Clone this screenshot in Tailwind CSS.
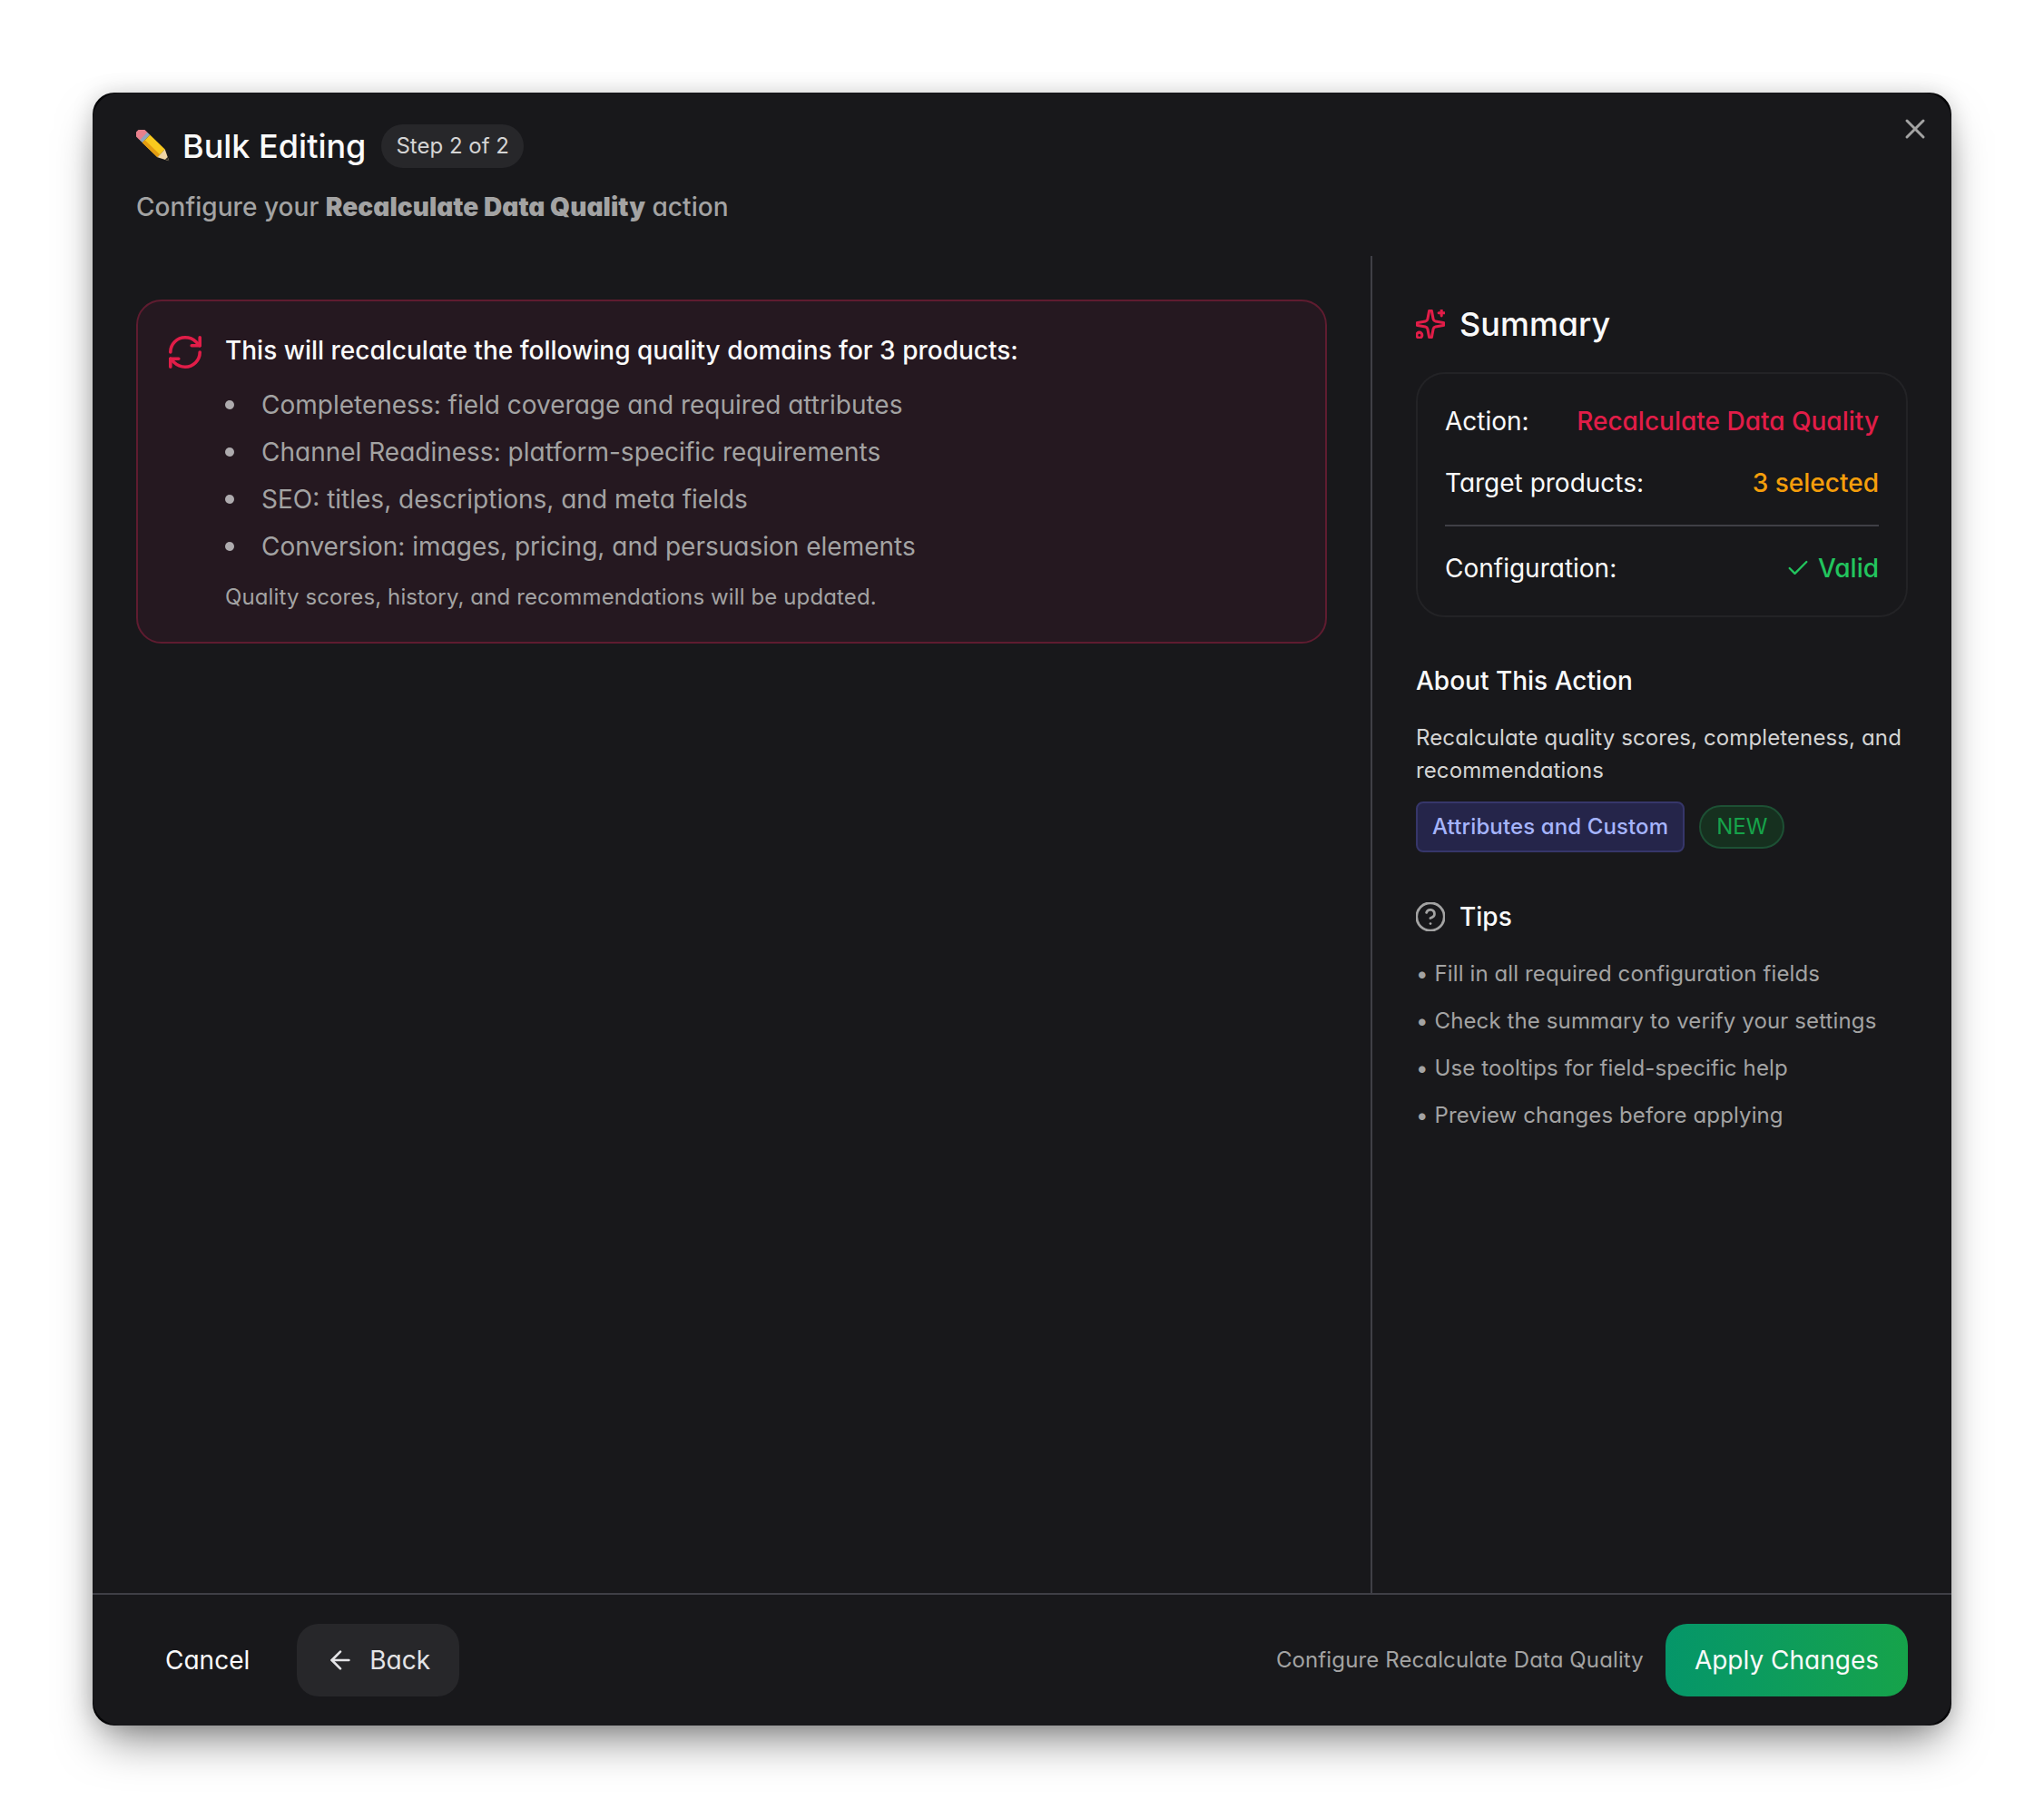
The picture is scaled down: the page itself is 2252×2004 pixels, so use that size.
<!DOCTYPE html>
<html lang="en">
<head>
<meta charset="utf-8">
<title>Bulk Editing</title>
<script src="https://cdn.jsdelivr.net/npm/@tailwindcss/browser@4"></script>
</head>
<body class="bg-white">
<div class="w-[2252px] h-[2004px] p-[102px] bg-white font-[Inter,sans-serif] [font-feature-settings:'cv11'] antialiased">
  <div class="w-[2048px] h-[1799px] bg-[#050507] rounded-[24px] shadow-[0_25px_50px_-12px_rgba(0,0,0,0.5),0_0_24px_rgba(0,0,0,0.15)]">
  <div class="relative w-full h-full flex flex-col bg-[#18181b] rounded-[30px]">
    <button class="absolute top-[22px] right-[22px] w-[36px] h-[36px] text-[#a3a3a3]">
      <svg viewBox="0 0 24 24" class="w-[36px] h-[36px]" fill="none" stroke="currentColor" stroke-width="2" stroke-linecap="round" stroke-linejoin="round"><path d="M18 6 6 18"/><path d="m6 6 12 12"/></svg>
    </button>

    <header class="h-[180px] shrink-0 px-[48px] pt-[35px]">
      <div class="flex items-center h-[48px]">
        <svg viewBox="0 0 38 36" class="w-[38px] h-[36px] mr-[13px]">
          <g transform="translate(6 5) rotate(44)">
            <rect x="-6" y="-6" width="11" height="12" rx="3" fill="#e8808c"/>
            <rect x="3" y="-6" width="4" height="12" fill="#8fa5bd"/>
            <rect x="7" y="-6" width="23" height="12" fill="#f8c91e"/>
            <rect x="7" y="2" width="23" height="4" fill="#e39c12"/>
            <polygon points="30,-6 42,0 30,6" fill="#f0d6a6"/>
            <polygon points="38,-2 42,0 38,2" fill="#33302c"/>
          </g>
        </svg>
        <h1 class="text-[36px] leading-[48px] font-medium text-[#fafafa]">Bulk Editing</h1>
        <span class="ml-[17px] h-[48px] flex items-center px-[16px] rounded-full bg-[#27272a] text-[24px] text-[#d4d4d4]">Step 2 of 2</span>
      </div>
      <p class="mt-[23px] text-[28px] leading-[40px] font-medium tracking-[0.05px] text-[#a3a3a3]">Configure your <span class="font-black">Recalculate Data Quality</span> action</p>
    </header>

    <main class="flex-1 flex min-h-0">
      <section class="flex-1 px-[48px] pt-[48px]">
        <div class="h-[379px] flex gap-[26px] pl-[34px] pr-[32px] pt-[34px] rounded-[28px] border-2 border-[#5f1c30] bg-[#251820]">
          <svg viewBox="2 2 20 20" class="w-[36px] h-[36px] shrink-0 mt-[4px]" fill="none" stroke="#e11d48" stroke-width="2" stroke-linecap="round" stroke-linejoin="round"><path d="M3 12a9 9 0 0 1 9-9 9.75 9.75 0 0 1 6.74 2.74L21 8"/><path d="M21 3v5h-5"/><path d="M21 12a9 9 0 0 1-9 9 9.75 9.75 0 0 1-6.74-2.74L3 16"/><path d="M8 16H3v5"/></svg>
          <div class="flex-1">
            <p class="text-[28px] leading-[40px] font-medium text-[#fafafa]">This will recalculate the following quality domains for 3 products:</p>
            <ul class="mt-[20px] text-[28px] leading-[40px] text-[#a3a3a3] flex flex-col gap-[12px]">
              <li class="flex items-center gap-[30px]"><span class="w-[10px] h-[10px] rounded-full bg-[#aeabae]"></span>Completeness: field coverage and required attributes</li>
              <li class="flex items-center gap-[30px]"><span class="w-[10px] h-[10px] rounded-full bg-[#aeabae]"></span>Channel Readiness: platform-specific requirements</li>
              <li class="flex items-center gap-[30px]"><span class="w-[10px] h-[10px] rounded-full bg-[#aeabae]"></span>SEO: titles, descriptions, and meta fields</li>
              <li class="flex items-center gap-[30px]"><span class="w-[10px] h-[10px] rounded-full bg-[#aeabae]"></span>Conversion: images, pricing, and persuasion elements</li>
            </ul>
            <p class="mt-[18px] text-[24px] leading-[36px] tracking-[0.12px] text-[#a3a3a3]">Quality scores, history, and recommendations will be updated.</p>
          </div>
        </div>
      </section>

      <aside class="w-[640px] shrink-0 border-l-2 border-[#3f3f46] px-[48px] pt-[51px]">
        <div class="flex items-center h-[48px] gap-[16px]">
          <svg viewBox="1.5 1.5 21 21" class="w-[32px] h-[32px] shrink-0" fill="none" stroke="#e11d48" stroke-width="2" stroke-linecap="round" stroke-linejoin="round"><path d="M11.017 2.814a1 1 0 0 1 1.966 0l1.051 5.558a2 2 0 0 0 1.594 1.594l5.558 1.051a1 1 0 0 1 0 1.966l-5.558 1.051a2 2 0 0 0-1.594 1.594l-1.051 5.558a1 1 0 0 1-1.966 0l-1.051-5.558a2 2 0 0 0-1.594-1.594l-5.558-1.051a1 1 0 0 1 0-1.966l5.558-1.051a2 2 0 0 0 1.594-1.594z"/><path d="M20 2v4"/><path d="M22 4h-4"/><circle cx="4" cy="20" r="2"/></svg>
          <h2 class="text-[36px] leading-[48px] font-medium text-[#fafafa]">Summary</h2>
        </div>

        <div class="mt-[29px] h-[270px] px-[30px] py-[30px] rounded-[32px] border-2 border-[#232326] bg-[#18181b] text-[28px] leading-[44px]">
          <div class="flex justify-between h-[44px]"><span class="text-[#fafafa]">Action:</span><span class="font-medium text-[#e11d48]">Recalculate Data Quality</span></div>
          <div class="flex justify-between h-[44px] mt-[24px]"><span class="text-[#fafafa]">Target products:</span><span class="font-medium text-[#f59e0b]">3 selected</span></div>
          <div class="h-[2px] bg-[#3f3f46] my-[24px]"></div>
          <div class="flex justify-between h-[44px]"><span class="text-[#fafafa]">Configuration:</span><span class="flex items-center gap-[8px] font-medium text-[#22c55e]"><svg viewBox="0 0 24 24" class="w-[28px] h-[28px]" fill="none" stroke="currentColor" stroke-width="2" stroke-linecap="round" stroke-linejoin="round"><path d="M20 6 9 17l-5-5"/></svg>Valid</span></div>
        </div>

        <h3 class="mt-[48px] text-[28px] leading-[44px] font-medium text-[#fafafa]">About This Action</h3>
        <p class="mt-[23px] text-[24px] leading-[36px] tracking-[0.12px] text-[#d4d4d4]">Recalculate quality scores, completeness, and recommendations</p>
        <div class="mt-[16px] flex items-center gap-[16px]">
          <span class="h-[56px] flex items-center px-[16px] rounded-[8px] border-2 border-[#36366a] bg-[#25254a] text-[24px] font-medium tracking-[0.12px] text-[#a5b4fc]">Attributes and Custom</span>
          <span class="h-[48px] flex items-center px-[17px] rounded-full border-2 border-[#1d5034] bg-[#16301f] text-[24px] text-[#16a34a]">NEW</span>
        </div>

        <div class="mt-[49px] flex items-center h-[44px] gap-[16px]">
          <svg viewBox="1.5 1.5 21 21" class="w-[32px] h-[32px] shrink-0" fill="none" stroke="#a3a3a3" stroke-width="1.8" stroke-linecap="round" stroke-linejoin="round"><circle cx="12" cy="12" r="10"/><path d="M9.09 9a3 3 0 0 1 5.83 1c0 2-3 3-3 3"/><path d="M12 17h.01"/></svg>
          <h3 class="text-[28px] leading-[44px] font-medium text-[#fafafa]">Tips</h3>
        </div>
        <ul class="mt-[23px] flex flex-col gap-[16px] text-[24px] leading-[36px] tracking-[0.12px] text-[#a3a3a3]">
          <li>• Fill in all required configuration fields</li>
          <li>• Check the summary to verify your settings</li>
          <li>• Use tooltips for field-specific help</li>
          <li>• Preview changes before applying</li>
        </ul>
      </aside>
    </main>

    <footer class="h-[146px] shrink-0 border-t-2 border-[#3f3f46] px-[48px] flex items-center justify-between">
      <div class="flex items-center gap-[20px]">
        <button class="h-[80px] px-[32px] rounded-[24px] text-[28px] text-[#fafafa]">Cancel</button>
        <button class="h-[80px] px-[32px] rounded-[24px] bg-[#27272a] flex items-center gap-[16px] text-[28px] text-[#e4e4e7]">
          <svg viewBox="0 0 24 24" class="w-[32px] h-[32px]" fill="none" stroke="currentColor" stroke-width="2" stroke-linecap="round" stroke-linejoin="round"><path d="m12 19-7-7 7-7"/><path d="M19 12H5"/></svg>
          Back
        </button>
      </div>
      <div class="flex items-center gap-[24px]">
        <span class="text-[24px] tracking-[0.12px] text-[#a3a3a3]">Configure Recalculate Data Quality</span>
        <button class="h-[80px] px-[32px] rounded-[24px] bg-gradient-to-r from-[#059669] to-[#16a34a] text-[28px] text-[#fafafa]">Apply Changes</button>
      </div>
    </footer>
  </div>
  </div>
</div>
</body>
</html>
